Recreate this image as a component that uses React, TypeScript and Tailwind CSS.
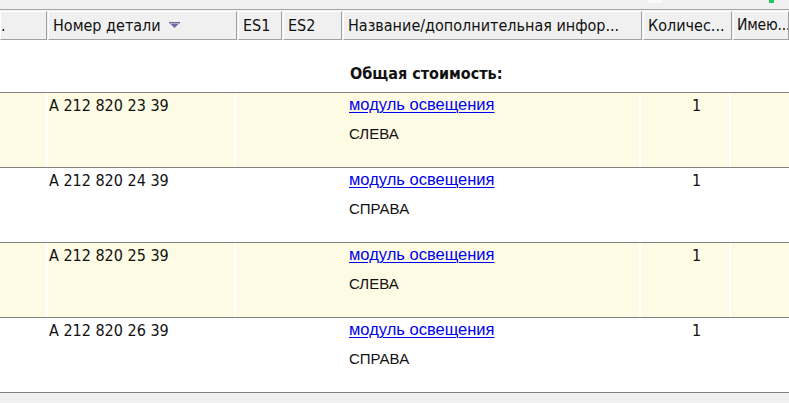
import React from "react";

type Part = {
  number: string;
  name: string;
  side: string;
  qty: number;
};

const parts: Part[] = [
  { number: "A 212 820 23 39", name: "модуль освещения", side: "СЛЕВА", qty: 1 },
  { number: "A 212 820 24 39", name: "модуль освещения", side: "СПРАВА", qty: 1 },
  { number: "A 212 820 25 39", name: "модуль освещения", side: "СЛЕВА", qty: 1 },
  { number: "A 212 820 26 39", name: "модуль освещения", side: "СПРАВА", qty: 1 },
];

const tahoma = "font-['DejaVu_Sans',sans-serif] [font-stretch:87.5%]";

const HeaderCell = ({
  children,
  className = "",
}: {
  children?: React.ReactNode;
  className?: string;
}) => (
  <div
    className={`flex items-center h-full px-[4px] border-l border-t border-l-white border-t-white border-r border-b border-r-[#a0a0a0] border-b-[#a0a0a0] whitespace-nowrap overflow-hidden ${className}`}
  >
    {children}
  </div>
);

const PartRow = ({ part, striped }: { part: Part; striped: boolean }) => {
  const bg = striped ? "bg-[#fdfbe4]" : "bg-white";
  return (
    <div className={`flex h-[75px] border-t border-[#808080] ${bg}`}>
      <div className="w-[48px] border-r-2 border-white" />
      <div className={`w-[188px] border-r-2 border-white pl-[1px] pt-[1px] text-[16px] text-[#111] ${tahoma}`}>
        {part.number}
      </div>
      <div className="w-[45px]" />
      <div className="w-[60px]" />
      <div className="w-[300px] border-r-2 border-white pl-[8px] pt-[1px] font-['Liberation_Sans',Arial,sans-serif] text-[#111]">
        <div className="text-[16.5px] leading-[20px]">
          <a href="#" className="text-[#0000ee] underline decoration-1 underline-offset-[2px]">
            {part.name}
          </a>
        </div>
        <div className="mt-[9px] text-[15px]">{part.side}</div>
      </div>
      <div className={`w-[90px] border-r-2 border-white pt-[1px] pl-[51px] text-[16px] text-[#111] ${tahoma}`}>
        {part.qty}
      </div>
      <div className="flex-1" />
    </div>
  );
};

export default function App() {
  return (
    <div className="w-[789px] h-[403px] bg-white overflow-hidden flex flex-col">
      <div className="h-[10px] bg-[#f0f0f0] border-b border-[#a8a8a8] flex shrink-0">
        <div className="ml-[648px] w-[14px] h-[3px] bg-[#fafafa]" />
        <div className="ml-[107px] w-[5px] h-[3px] bg-[#22c55e]" />
      </div>
      <div className={`h-[30px] pt-[1px] bg-[#f0f0f0] flex text-[16px] text-[#111] shrink-0 ${tahoma}`}>
        <HeaderCell className="w-[47px] justify-start pl-0">.</HeaderCell>
        <HeaderCell className="w-[189px] ml-[1px] pl-[4px]">
          <span>Номер детали</span>
          <svg width="11" height="6" viewBox="0 0 11 6" className="ml-[8px] mt-[-2px]">
            <rect x="0" y="0" width="11" height="1.5" fill="#6a6a9a" />
            <polygon points="1.5,2 9.5,2 5.5,6" fill="#6a6aa8" />
          </svg>
        </HeaderCell>
        <HeaderCell className="w-[44px] ml-[1px]">ES1</HeaderCell>
        <HeaderCell className="w-[59px] ml-[1px]">ES2</HeaderCell>
        <HeaderCell className="w-[299px] ml-[1px]">Название/дополнительная инфор...</HeaderCell>
        <HeaderCell className="w-[89px] ml-[1px] px-[3px]">Количес...</HeaderCell>
        <HeaderCell className="flex-1 ml-[1px] pl-[3px] pr-0 text-[15.5px] tracking-[-0.2px]">Имею...</HeaderCell>
      </div>
      <div className="h-[52px] flex items-center shrink-0">
        <div className={`ml-[350px] mt-[16px] font-bold text-[16px] text-[#111] ${tahoma}`}>
          Общая стоимость:
        </div>
      </div>
      {parts.map((part, i) => (
        <PartRow key={part.number} part={part} striped={i % 2 === 0} />
      ))}
      <div className="flex-1 bg-[#f0f0f0] border-t border-[#808080]" />
    </div>
  );
}
